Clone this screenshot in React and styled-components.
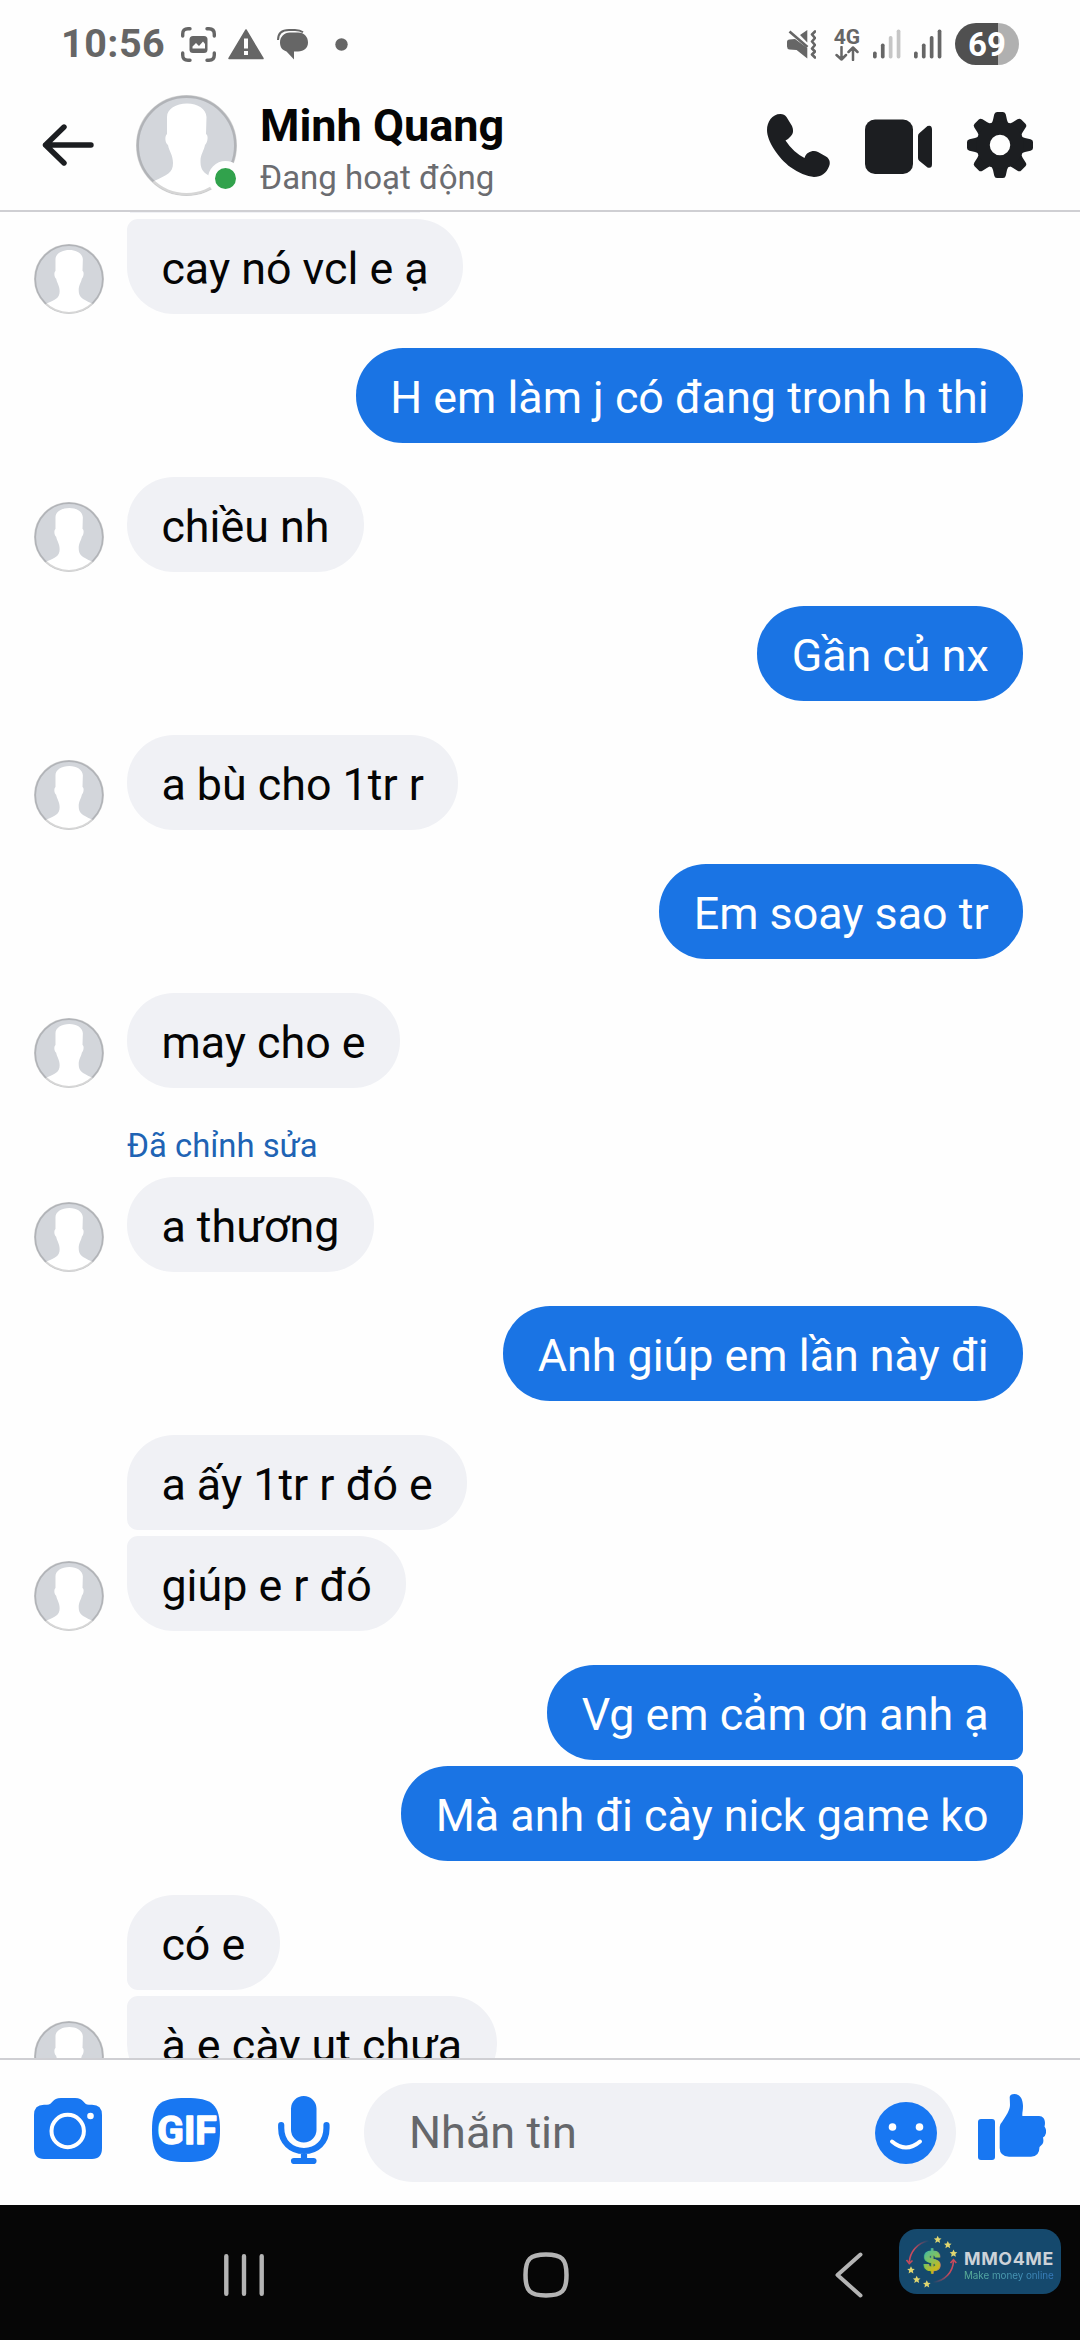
import React from 'react';
import styled, { createGlobalStyle, css } from 'styled-components';

const GlobalStyle = createGlobalStyle`
  * {
    box-sizing: border-box;
  }
  body {
    margin: 0;
    background: #fefefe;
    font-family: Roboto, 'Noto Sans', sans-serif;
  }
  svg {
    display: block;
    flex: none;
  }
`;

const Screen = styled.div`
  width: 1080px;
  height: 2340px;
  display: flex;
  flex-direction: column;
  overflow: hidden;
  background: #fefefe;
`;

/* Status bar */

const StatusBar = styled.div`
  height: 88px;
  flex: none;
  padding: 0 61px 0 61px;
  display: flex;
  align-items: center;
  justify-content: space-between;
  color: #666;
`;

const StatusGroup = styled.div`
  display: flex;
  align-items: center;
`;

const Clock = styled.span`
  width: 120px;
  font-size: 39.5px;
  font-weight: 700;
  line-height: 88px;
  letter-spacing: 0.5px;
`;

const StatusIcon = styled.span`
  margin-left: ${(props) => props.$gap || 0}px;
`;

const Network = styled.div`
  width: 28px;
  margin: 0 12px 0 17px;
  display: flex;
  flex-direction: column;
  align-items: center;
  font-size: 21px;
  font-weight: 700;
  line-height: 18px;
`;

const Battery = styled.div`
  width: 64px;
  height: 42px;
  margin-left: 13px;
  border-radius: 21px;
  background: linear-gradient(to right, #505050 43px, #b0b0b0 43px);
  color: #fff;
  font-size: 33px;
  font-weight: 700;
  line-height: 43px;
  text-align: center;
`;

/* Header */

const Header = styled.header`
  height: 124px;
  flex: none;
  padding: 0 47px 0 42px;
  display: flex;
  align-items: flex-start;
  border-bottom: 2px solid #cfcfd3;
`;

const BackButton = styled.div`
  width: 94px;
  padding-top: 36px;
`;

const ProfilePic = styled.div`
  position: relative;
  width: 101px;
  height: 101px;
  margin-top: 7px;
`;

const OnlineDot = styled.span`
  position: absolute;
  right: -6px;
  bottom: 0;
  width: 35px;
  height: 35px;
  border: 7px solid #fefefe;
  border-radius: 50%;
  background: #31a24c;
`;

const Contact = styled.div`
  flex: 1;
  margin-left: 23px;
  padding-top: 11px;
`;

const ContactName = styled.div`
  font-size: 45px;
  font-weight: 700;
  line-height: 54px;
  color: #050505;
  white-space: nowrap;
`;

const ContactStatus = styled.div`
  font-size: 33px;
  line-height: 50px;
  color: #6b6c70;
`;

const Actions = styled.div`
  display: flex;
  align-items: center;
  gap: 35px;
  padding-top: 24px;
`;

const VideoSlot = styled.div`
  padding-top: 4px;
`;

/* Messages */

const Thread = styled.main`
  height: 1846px;
  flex: none;
  overflow: hidden;
  display: flex;
  flex-direction: column;
  padding: 0 57px 0 34px;
`;

const Remnant = styled.div`
  width: 290px;
  height: 1px;
  flex: none;
  margin-left: 96px;
  background: #f0f1f5;
`;

const Row = styled.div`
  flex: none;
  display: flex;
  align-items: flex-end;
  justify-content: ${(props) => (props.$mine ? 'flex-end' : 'flex-start')};
  margin-top: ${(props) => (props.$joined ? 6 : 34)}px;
`;

const AvatarSlot = styled.div`
  width: 93px;
  height: 70px;
`;

const Bubble = styled.div`
  height: 95px;
  padding: 5px 34.4px 0;
  border-radius: 47px;
  font-size: 44.8px;
  line-height: 90px;
  white-space: nowrap;
  color: ${(props) => (props.$mine ? '#fff' : '#050505')};
  background: ${(props) => (props.$mine ? '#1a74e4' : '#f0f1f5')};
  ${(props) =>
    props.$joinTop &&
    css`
      border-top-${props.$mine ? 'right' : 'left'}-radius: 11px;
    `}
  ${(props) =>
    props.$joinBottom &&
    css`
      border-bottom-${props.$mine ? 'right' : 'left'}-radius: 11px;
    `}
`;

const EditedLabel = styled.div`
  flex: none;
  height: 55px;
  margin: 34px 0 -34px 93px;
  font-size: 32.8px;
  line-height: 48px;
  color: #2063b4;
`;

/* Composer */

const Composer = styled.footer`
  height: 147px;
  flex: none;
  padding: 0 34px;
  display: flex;
  align-items: center;
  border-top: 2px solid #cfcfd3;
`;

const Tools = styled.div`
  width: 330px;
  margin-top: -5px;
  display: flex;
  align-items: center;
  gap: 50px;
`;

const CameraSlot = styled.div`
  margin-top: -3px;
`;

const MicSlot = styled.div`
  margin-left: 8px;
`;

const MessageInput = styled.div`
  width: 592px;
  height: 99px;
  margin-right: 22px;
  padding: 0 19px 0 45px;
  border-radius: 50px;
  display: flex;
  align-items: center;
  justify-content: space-between;
  background: #f0f1f5;
  color: #65676b;
  font-size: 45px;
`;

const LikeSlot = styled.div`
  margin-top: -12px;
`;

/* System navigation */

const NavBar = styled.nav`
  height: 135px;
  flex: none;
  padding: 0 19px 0 224px;
  display: flex;
  align-items: center;
  background: #060606;
`;

const NavButton = styled.div`
  margin: 4px ${(props) => props.$after}px 0 0;
`;

const Watermark = styled.div`
  width: 162px;
  height: 65px;
  margin-top: -22px;
  border-radius: 18px;
  display: flex;
  align-items: center;
  background: #15496d;
`;

const WatermarkText = styled.div`
  padding-top: 8px;
`;

const Brand = styled.div`
  font-family: Inter, sans-serif;
  font-size: 17.8px;
  font-weight: 700;
  line-height: 18px;
  letter-spacing: 0.6px;
  color: #ccd2d8;
`;

const Tagline = styled.div`
  font-family: Inter, sans-serif;
  font-size: 9.9px;
  line-height: 14px;
  letter-spacing: -0.05px;
  white-space: nowrap;
  color: transparent;
  background: linear-gradient(to right, #5cb396, #4a9ab4 50%, #3478bc);
  background-clip: text;
`;

const Avatar = ({ size }) => (
  <svg width={size} height={size} viewBox="0 0 101 101">
    <clipPath id={`face${size}`}>
      <circle cx="50.5" cy="50.5" r="50" />
    </clipPath>
    <g clipPath={`url(#face${size})`}>
      <rect width="101" height="101" fill="#d3d6db" />
      <path
        d="M51 8.5C62 8.5 70 14 70.5 22L70 39C72.5 40 72 47 69 50C68 56 64.5 59 64.5 66C64.5 76 68 79 84 86L101 101H0L18 86C31 80 37 78 37 68C37 60 33 56 32 50C29 48 28.5 41 31 39L31 22C31 14 40 8.5 51 8.5Z"
        fill="#fff"
      />
    </g>
    <circle cx="50.5" cy="50.5" r="49" fill="none" stroke="#000" strokeOpacity=".16" strokeWidth="3" />
  </svg>
);

const CaptureIcon = () => (
  <svg width="35" height="35" viewBox="0 0 35 35" fill="none" stroke="#666" strokeWidth="3.4" strokeLinecap="round">
    <path d="M1.7 9V7Q1.7 1.7 7 1.7H9M26 1.7H28Q33.3 1.7 33.3 7V9M33.3 26V28Q33.3 33.3 28 33.3H26M9 33.3H7Q1.7 33.3 1.7 28V26" />
    <rect x="8.5" y="9" width="18" height="17" rx="3.5" fill="#666" stroke="none" />
    <path d="M11.5 21.5V19.5L15 16L18 19L22 14.5L24 17V21.5Z" fill="#fefefe" stroke="none" />
  </svg>
);

const WarningIcon = () => (
  <svg width="36" height="31" viewBox="0 0 36 31">
    <path d="M18 1L35 29.5H1Z" fill="#666" stroke="#666" strokeWidth="1.5" strokeLinejoin="round" />
    <path d="M16 9.5H20V19.5H16ZM16 22H20V26H16Z" fill="#fefefe" />
  </svg>
);

const ChatIcon = () => (
  <svg width="32" height="31" viewBox="0 0 32 31">
    <path d="M1 11C1 4 5.5 1 12 1H18C22 1 24 1.8 26 3.3" fill="none" stroke="#666" strokeWidth="2" />
    <path d="M13 3.5H21C27.5 3.5 31 8 31 13.5C31 19 27 22.5 21 22.5H17V30.5L9.5 22.5C5 21 3 18 3 13.5C3 8 7 3.5 13 3.5Z" fill="#666" />
  </svg>
);

const MuteIcon = () => (
  <svg width="29" height="29" viewBox="0 0 29 29">
    <path d="M0 12Q0 9.5 2.5 9.5L8 9L20.3 18V28.5L9.6 20L2.5 19.5Q0 19 0 16.5ZM13 5L20.3 0V12.5Z" fill="#666" />
    <path d="M2.5 1.5L20.5 17" fill="none" stroke="#666" strokeWidth="2.6" />
    <path d="M28 1.5L25 4.5L28 8L25 11.5L28 15L25 18.5L28 21.5L25 24.5L28 27.5" fill="none" stroke="#666" strokeWidth="2.6" strokeLinejoin="round" strokeLinecap="round" />
  </svg>
);

const DataArrows = () => (
  <svg width="24" height="15" viewBox="0 0 24 15" fill="none" stroke="#666" strokeWidth="2.5" strokeLinecap="round" strokeLinejoin="round">
    <path d="M6.5 1V13.5M1.5 9L6.5 13.5L11 9M18 14V1.5M13.5 6L18 1.5L22.5 6" />
  </svg>
);

const Signal = ({ level }) => (
  <svg width="28" height="30" viewBox="0 0 28 30">
    {[7, 15, 22.5, 29].map((height, i) => (
      <rect key={i} x={i * 7.9} y={29.5 - height} width="3.7" height={height} rx="1.7" fill={i < level ? '#666' : '#c6c6c6'} />
    ))}
  </svg>
);

const BackIcon = () => (
  <svg width="52" height="42" viewBox="0 0 52 42" fill="none" stroke="#1c1e21" strokeWidth="5.4" strokeLinecap="round" strokeLinejoin="round">
    <path d="M49 21H3.5M22 3L3.5 21L22 39" />
  </svg>
);

const PhoneIcon = () => (
  <svg width="63" height="63" viewBox="0 0 63 63" fill="#1c1e21">
    <path d="M13.4 0Q17.5 0 19.5 3L25 12C27 17 26 20 23.5 22.5Q22 24.5 18.5 26.5Q26 38 37.5 44C39 39 43 37 47 37Q49 37 51 38L59 42.5C63 45 63.5 49 62 52.5C59.5 59 54 63 47 63Q36 62 24 53.5C11 44 0 27 0 16C0 8 5 0 13.4 0Z" />
  </svg>
);

const VideoIcon = () => (
  <svg width="67" height="56" viewBox="0 0 67 56" fill="#1c1e21">
    <rect y=".5" width="48" height="54.5" rx="10" />
    <path d="M53 17Q53 15 54.5 14L62.5 7Q67 5.5 67 10.5V45Q67 50 62.5 48.500L54.5 42Q53 41 53 39Z" />
  </svg>
);

const GearIcon = () => (
  <svg width="66" height="66" viewBox="-33 -33 66 66" fill="#1c1e21">
    {[0, 45, 90, 135, 180, 225, 270, 315].map((angle) => (
      <path key={angle} transform={`rotate(${angle})`} d="M-10 -20Q-7.5 -22 -7 -25L-5.8 -30.5Q-5.3 -33 -3 -33H3Q5.3 -33 5.8 -30.5L7 -25Q7.5 -22 10 -20Z" />
    ))}
    <circle r="17" fill="none" stroke="#1c1e21" strokeWidth="13.5" />
  </svg>
);

const CameraIcon = () => (
  <svg width="68" height="61" viewBox="0 0 68 61">
    <path d="M10 6.7H13C19 6.7 18 0 27 0H41C50 0 49 6.7 55 6.7H58Q68 6.7 68 17V50Q68 61 58 61H10Q0 61 0 50V17Q0 6.7 10 6.7Z" fill="#1877f2" />
    <circle cx="33.7" cy="33" r="16.2" fill="none" stroke="#fff" strokeWidth="4" />
    <circle cx="56.5" cy="18" r="3.3" fill="#fff" />
  </svg>
);

const GifIcon = () => (
  <svg width="68" height="64" viewBox="0 0 68 64">
    <path d="M34 0C60 0 68 6 68 32C68 58 60 64 34 64C8 64 0 58 0 32C0 6 8 0 34 0Z" fill="#1877f2" />
    <text x="5.2 32 43.2" y="45.5" fontFamily="Roboto" fontSize="39" fontWeight="700" fill="#fff" stroke="#fff" strokeWidth="1.4" strokeLinejoin="round">
      GIF
    </text>
  </svg>
);

const MicIcon = () => (
  <svg width="52" height="68" viewBox="0 0 52 68" fill="none" stroke="#1877f2" strokeWidth="6.2" strokeLinecap="round">
    <rect x="13" y="0" width="25.5" height="46.5" rx="12.7" fill="#1877f2" stroke="none" />
    <path d="M3.2 29V32C3.2 46 13 55 26 55S48.5 46 48.5 32V29M26 56V64M16 65H35.5" />
  </svg>
);

const SmileIcon = () => (
  <svg width="62" height="62" viewBox="0 0 62 62">
    <circle cx="31" cy="31" r="31" fill="#1877f2" />
    <circle cx="17.5" cy="25" r="3.8" fill="#fff" />
    <circle cx="44.5" cy="25" r="3.8" fill="#fff" />
    <path d="M17 39.5Q31 51.5 45 39.5" fill="none" stroke="#fff" strokeWidth="4" strokeLinecap="round" />
  </svg>
);

const LikeIcon = () => (
  <svg width="68" height="66" viewBox="0 0 68 66" fill="#1877f2">
    <rect y="25" width="17" height="41" rx="3" />
    <path d="M21.7 33Q21.7 30 24 28C28 22 32 16 32 11L31.7 3Q32 0 36.5 0C42 0 45 5 45 12C45 17 44 19 44.4 22H61C66 22 68 27 66.5 32.5Q68.5 35 68 39Q67.5 42 65 43.5Q66 48 64.5 50L61.5 53Q61.5 62.5 53 62.7H31Q21.7 62 21.7 54Z" />
  </svg>
);

const RecentsIcon = () => (
  <svg width="40" height="42" viewBox="0 0 40 42" stroke="#b4b4b4" strokeWidth="4.4" strokeLinecap="round">
    <path d="M2.3 2.2V39.8M20 2.2V39.8M37.7 2.2V39.8" />
  </svg>
);

const HomeIcon = () => (
  <svg width="46" height="46" viewBox="0 0 46 46" fill="none" stroke="#b4b4b4" strokeWidth="4.5">
    <path d="M23 2.5C39 2.5 43.5 7 43.5 23S39 43.5 23 43.5S2.5 39 2.5 23S7 2.5 23 2.5Z" />
  </svg>
);

const NavBackIcon = () => (
  <svg width="28" height="46" viewBox="0 0 28 46" fill="none" stroke="#b4b4b4" strokeWidth="4" strokeLinecap="round" strokeLinejoin="round">
    <path d="M25.5 2.5L2.5 23L25.5 43.5" />
  </svg>
);

const stars = [
  [38.7, 10.5],
  [48.8, 15.7],
  [54.5, 24.3],
  [12, 41],
  [17.7, 50.5],
  [27.8, 55],
];

const MoneyLogo = () => (
  <svg width="65" height="65" viewBox="0 0 65 65">
    <defs>
      <linearGradient id="dollar" x1=".2" y1="0" x2=".6" y2="1">
        <stop offset=".15" stopColor="#4cbc9c" />
        <stop offset=".5" stopColor="#84c25c" />
        <stop offset=".8" stopColor="#c8b81e" />
      </linearGradient>
      <linearGradient id="arcLeft" x1="1" y1="0" x2="0" y2="1">
        <stop offset="0" stopColor="#c84a5c" stopOpacity="0" />
        <stop offset=".6" stopColor="#c84a5c" />
      </linearGradient>
      <linearGradient id="arcRight" x1="0" y1="1" x2="1" y2="0">
        <stop offset="0" stopColor="#c84a5c" stopOpacity="0" />
        <stop offset=".6" stopColor="#c84a5c" />
      </linearGradient>
    </defs>
    <path d="M30 11.5C18 14 11 23 10.3 33" fill="none" stroke="url(#arcLeft)" strokeWidth="1.6" />
    <path d="M7.5 31L10.3 34.5L13.5 31.5" fill="none" stroke="#c84a5c" strokeWidth="1.6" />
    <path d="M34 53.5C46 52 54 43 54.5 32" fill="none" stroke="url(#arcRight)" strokeWidth="1.6" />
    <path d="M51.5 34L54.5 30.8L57.3 34" fill="none" stroke="#c84a5c" strokeWidth="1.6" />
    <text x="33" y="41.5" textAnchor="middle" fontFamily="Inter" fontSize="27" fontWeight="800" fill="url(#dollar)" stroke="url(#dollar)" strokeWidth=".8">
      $
    </text>
    {stars.map(([x, y]) => (
      <path key={x} transform={`translate(${x} ${y})`} d="M0 -3.8L1.2 -1.3L3.8 -1L1.8 .8L2.4 3.5L0 2.1L-2.4 3.5L-1.8 .8L-3.8 -1L-1.2 -1.3Z" fill="#e0d670" />
    ))}
  </svg>
);

const messages = [
  { text: 'cay nó vcl e ạ', avatar: true, joinTop: true },
  { text: 'H em làm j có đang tronh h thi', mine: true },
  { text: 'chiều nh', avatar: true },
  { text: 'Gần củ nx', mine: true },
  { text: 'a bù cho 1tr r', avatar: true },
  { text: 'Em soay sao tr', mine: true },
  { text: 'may cho e', avatar: true },
  { text: 'a thương', avatar: true, edited: true },
  { text: 'Anh giúp em lần này đi', mine: true },
  { text: 'a ấy 1tr r đó e', joinBottom: true },
  { text: 'giúp e r đó', avatar: true, joinTop: true },
  { text: 'Vg em cảm ơn anh ạ', mine: true, joinBottom: true },
  { text: 'Mà anh đi cày nick game ko', mine: true, joinTop: true },
  { text: 'có e', joinBottom: true },
  { text: 'à e cày ut chưa', avatar: true, joinTop: true },
];

const Message = ({ message }) => (
  <>
    {message.edited && <EditedLabel>Đã chỉnh sửa</EditedLabel>}
    <Row $mine={message.mine} $joined={message.joinTop}>
      {!message.mine && <AvatarSlot>{message.avatar && <Avatar size={70} />}</AvatarSlot>}
      <Bubble $mine={message.mine} $joinTop={message.joinTop} $joinBottom={message.joinBottom}>
        {message.text}
      </Bubble>
    </Row>
  </>
);

const App = () => {
  return (
    <Screen>
      <GlobalStyle />
      <StatusBar>
        <StatusGroup>
          <Clock>10:56</Clock>
          <StatusIcon><CaptureIcon /></StatusIcon>
          <StatusIcon $gap={12}><WarningIcon /></StatusIcon>
          <StatusIcon $gap={13}><ChatIcon /></StatusIcon>
          <StatusIcon $gap={26}>
            <svg width="13" height="13"><circle cx="6.5" cy="6.5" r="6.2" fill="#666" /></svg>
          </StatusIcon>
        </StatusGroup>
        <StatusGroup>
          <StatusIcon><MuteIcon /></StatusIcon>
          <Network>
            <span>4G</span>
            <DataArrows />
          </Network>
          <StatusIcon><Signal level={2} /></StatusIcon>
          <StatusIcon $gap={13}><Signal level={4} /></StatusIcon>
          <Battery>69</Battery>
        </StatusGroup>
      </StatusBar>

      <Header>
        <BackButton><BackIcon /></BackButton>
        <ProfilePic>
          <Avatar size={101} />
          <OnlineDot />
        </ProfilePic>
        <Contact>
          <ContactName>Minh Quang</ContactName>
          <ContactStatus>Đang hoạt động</ContactStatus>
        </Contact>
        <Actions>
          <PhoneIcon />
          <VideoSlot><VideoIcon /></VideoSlot>
          <GearIcon />
        </Actions>
      </Header>

      <Thread>
        <Remnant />
        {messages.map((message, index) => (
          <Message key={index} message={message} />
        ))}
      </Thread>

      <Composer>
        <Tools>
          <CameraSlot><CameraIcon /></CameraSlot>
          <GifIcon />
          <MicSlot><MicIcon /></MicSlot>
        </Tools>
        <MessageInput>
          <span>Nhắn tin</span>
          <SmileIcon />
        </MessageInput>
        <LikeSlot><LikeIcon /></LikeSlot>
      </Composer>

      <NavBar>
        <NavButton $after={259}><RecentsIcon /></NavButton>
        <NavButton $after={266}><HomeIcon /></NavButton>
        <NavButton $after={36}><NavBackIcon /></NavButton>
        <Watermark>
          <MoneyLogo />
          <WatermarkText>
            <Brand>MMO4ME</Brand>
            <Tagline>Make money online</Tagline>
          </WatermarkText>
        </Watermark>
      </NavBar>
    </Screen>
  );
};

export default App;
